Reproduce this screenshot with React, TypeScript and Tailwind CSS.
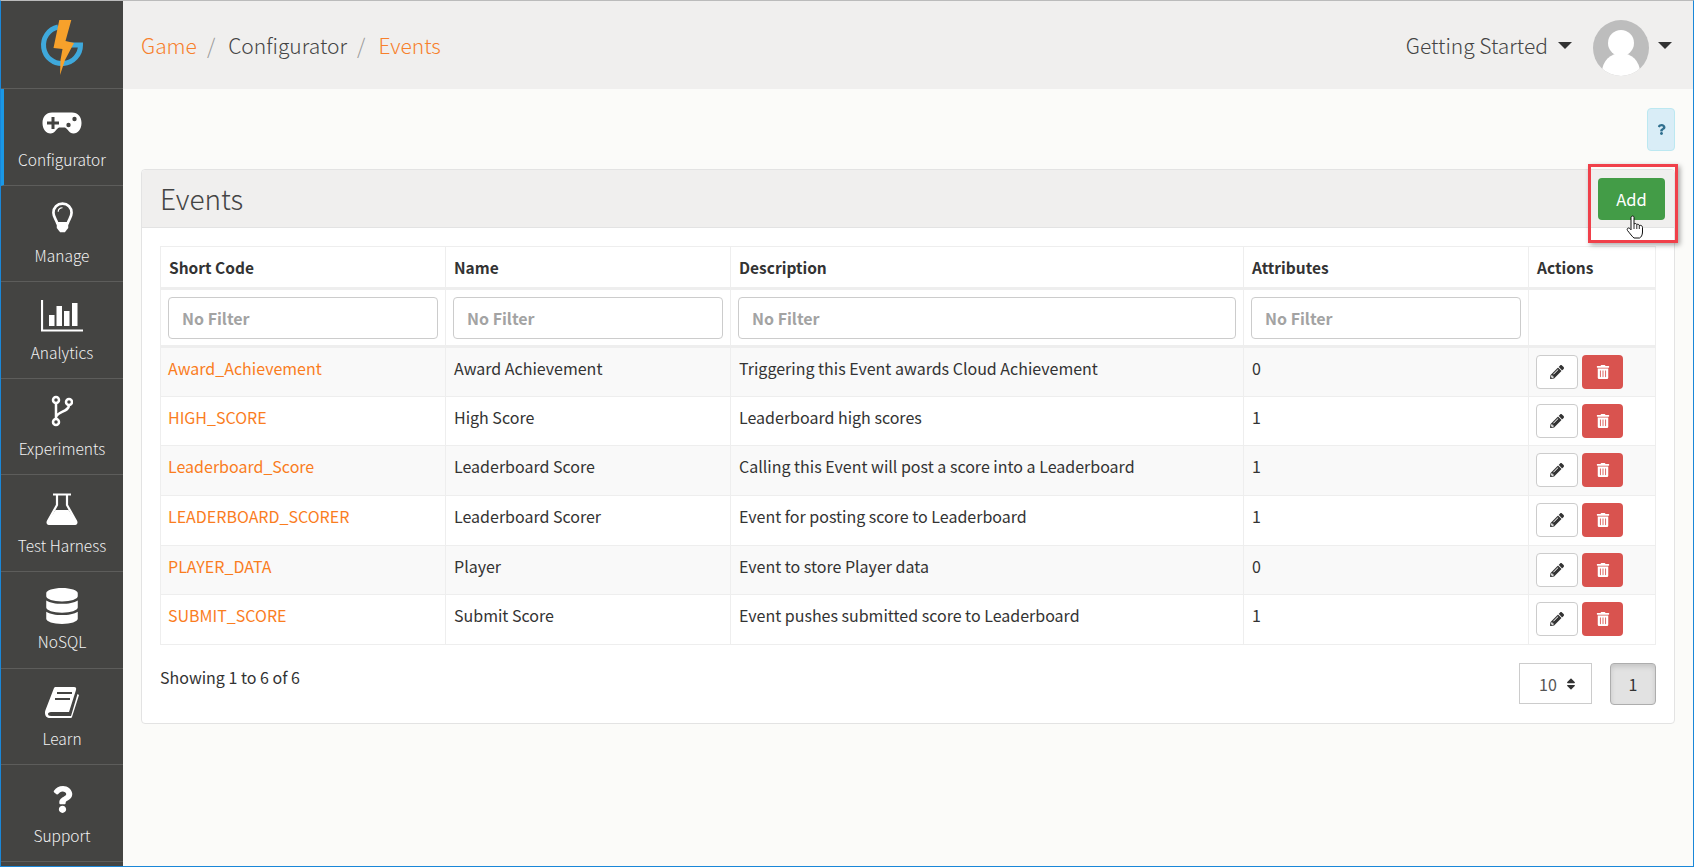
import type { ReactNode } from 'react'
import { FaDatabase, FaPencilAlt, FaQuestion, FaSort, FaTrashAlt } from 'react-icons/fa'

const font = '[font-family:"Noto_Sans_CJK_SC","Source_Sans_Pro","Noto_Sans",sans-serif]'

function Logo() {
  return (
    <svg width="48" height="60" viewBox="38 18 48 60" className="mt-[6px]">
      <path
        d="M58 27 A18.5 18.5 0 1 0 80.500 45 L70 45"
        fill="none"
        stroke="#3fa9dc"
        strokeWidth="5"
      />
      <path d="M59.300 20 H71.300 L65.500 41 L74 43 L65 60 L60 75 L60.500 60 L62.500 49 L53.500 48 Z" fill="#f7a12b" />
    </svg>
  )
}

function Gamepad() {
  return (
    <svg width="40" height="22" viewBox="0 0 40 22">
      <path
        d="M10 0.500 H30 C36 0.500 39.500 5 39.500 11 C39.500 17 36 21.500 31.500 21.500 C27 21.500 26 17 23 15.500 H17 C14 17 13 21.500 8.500 21.500 C4 21.500 0.500 17 0.500 11 C0.500 5 4 0.500 10 0.500 Z"
        fill="#fff"
      />
      <path d="M9.500 5 h3 v4.500 h4.500 v3 h-4.500 v4.500 h-3 v-4.500 h-4.500 v-3 h4.500 z" fill="#444442" />
      <circle cx="32.500" cy="7" r="2.200" fill="#444442" />
      <circle cx="26.500" cy="13" r="2.200" fill="#444442" />
    </svg>
  )
}

function Bulb() {
  return (
    <svg width="21" height="31" viewBox="0 0 22 32" className="-mt-[4px]">
      <path
        d="M11 1.500 C5.500 1.500 1.500 5.500 1.500 11 C1.500 15.500 4.500 18 5.500 22 H16.500 C17.500 18 20.500 15.500 20.500 11 C20.500 5.500 16.500 1.500 11 1.500 Z"
        fill="none"
        stroke="#fff"
        strokeWidth="2.800"
      />
      <path d="M5 21 H17 V27 L13.500 31.500 H8.500 L5 27 Z" fill="#fff" />
      <path d="M6.500 10 C6.500 7.500 8.500 5.800 11 5.800" fill="none" stroke="#fff" strokeWidth="1.200" />
    </svg>
  )
}

function Bars() {
  return (
    <svg width="42" height="32" viewBox="0 0 42 32">
      <path d="M1 0 V30.500 H42" fill="none" stroke="#fff" strokeWidth="2.200" />
      <rect x="8" y="15" width="5.500" height="11" fill="#fff" />
      <rect x="15.500" y="6" width="5.500" height="20" fill="#fff" />
      <rect x="23" y="11" width="5.500" height="15" fill="#fff" />
      <rect x="31" y="3" width="5.500" height="23" fill="#fff" />
    </svg>
  )
}

function Branch() {
  return (
    <svg width="22" height="32" viewBox="0 0 22 32" className="-mt-[4px]">
      <g fill="none" stroke="#fff" strokeWidth="2.500">
        <circle cx="5" cy="5" r="3" />
        <circle cx="5" cy="27" r="3" />
        <circle cx="18" cy="7" r="3" />
        <path d="M5 8 V24 M18 10 C18 17 7 16 5 22" />
      </g>
    </svg>
  )
}

function Flask() {
  return (
    <svg width="32" height="32" viewBox="0 0 32 32">
      <path d="M7 1.500 H25 M11 1.500 V12 L2 28 C1 30 2 31 4 31 H28 C30 31 31 30 30 28 L21 12 V1.500" fill="none" stroke="#fff" strokeWidth="2.200" />
      <path d="M9.500 17 H22.500 L30 28 C31 30 30 31 28 31 H4 C2 31 1 30 2 28 Z" fill="#fff" />
    </svg>
  )
}

function Book() {
  return (
    <svg width="34" height="31" viewBox="0 0 34 31">
      <path
        d="M9 1 C9.500 0.300 10 0 11 0 H29 C31 0 31.500 1 31 3 L24 25 H6 C4 25 3 26 3 27 C3 28 4 29 6 29 H26 L32.500 7 L34 8 L27 30 C26.700 31 26 31 25 31 H5 C2 31 0 29 0 26 C0 25 0 24 0.500 23 Z"
        fill="#fff"
      />
      <path d="M12 6 H27 M10 12 H25" stroke="#444442" strokeWidth="2" fill="none" />
    </svg>
  )
}

function Hand() {
  return (
    <svg width="18" height="24" viewBox="0 0 18 24">
      <path
        d="M5.500 1.500 C6.500 0.500 8 1 8 2.500 V9 C9 8.300 10.200 8.300 10.800 9.500 C11.700 9 12.900 9.300 13.300 10.500 C14.500 10 16.500 10.500 16.500 12.500 V17 C16.500 20 15 22.500 13.500 23 H8 C6.500 22 4 18.500 1.500 15.500 C0.500 14 2 12 3.800 13.500 L5 14.800 V2.500 Z"
        fill="#fff"
        stroke="#111"
        strokeWidth="1"
      />
      <path d="M8 9 V14 M10.800 9.500 V14 M13.300 10.500 V14" stroke="#111" strokeWidth="0.900" fill="none" />
    </svg>
  )
}

function Caret() {
  return <span className="w-0 h-0 border-x-[7px] border-x-transparent border-t-[7px] border-t-[#333]" />
}

const navItems: { label: string; icon: ReactNode; active?: boolean }[] = [
  { label: 'Configurator', icon: <Gamepad />, active: true },
  { label: 'Manage', icon: <Bulb /> },
  { label: 'Analytics', icon: <Bars /> },
  { label: 'Experiments', icon: <Branch /> },
  { label: 'Test Harness', icon: <Flask /> },
  { label: 'NoSQL', icon: <FaDatabase className="text-[36px] text-white" /> },
  { label: 'Learn', icon: <Book /> },
  { label: 'Support', icon: <FaQuestion className="text-[27px] text-white" /> },
]

const rows = [
  { code: 'Award_Achievement', name: 'Award Achievement', desc: 'Triggering this Event awards Cloud Achievement', attrs: 0 },
  { code: 'HIGH_SCORE', name: 'High Score', desc: 'Leaderboard high scores', attrs: 1 },
  { code: 'Leaderboard_Score', name: 'Leaderboard Score', desc: 'Calling this Event will post a score into a Leaderboard', attrs: 1 },
  { code: 'LEADERBOARD_SCORER', name: 'Leaderboard Scorer', desc: 'Event for posting score to Leaderboard', attrs: 1 },
  { code: 'PLAYER_DATA', name: 'Player', desc: 'Event to store Player data', attrs: 0 },
  { code: 'SUBMIT_SCORE', name: 'Submit Score', desc: 'Event pushes submitted score to Leaderboard', attrs: 1 },
]

const columns = [
  { label: 'Short Code', width: 'w-[285px]' },
  { label: 'Name', width: 'w-[285px]' },
  { label: 'Description', width: 'w-[513px]' },
  { label: 'Attributes', width: 'w-[285px]' },
]

function FilterInput() {
  return (
    <input
      placeholder="No Filter"
      className="block w-full h-[42px] px-[13px] bg-white border border-[#ccc] rounded text-base font-bold placeholder:text-[#a3a3a3]"
    />
  )
}

export default function App() {
  return (
    <div className={`${font} flex w-[1694px] h-[867px] overflow-hidden border-t border-t-[#bbb] border-x border-b border-x-[#1a87d8] border-b-[#1a87d8] bg-[#fbfbf9] text-[#333]`}>
      <aside className="w-[122px] shrink-0 bg-[#444442] text-[#f2f2f2]">
        <div className="h-[88px] flex items-center justify-center border-b border-[#5d5d5b]">
          <Logo />
        </div>
        {navItems.map(({ label, icon, active }) => (
          <div
            key={label}
            className={`h-[96.6px] flex flex-col items-center border-b border-[#5d5d5b] ${active ? 'border-l-[3px] border-l-[#1a98e6] pr-[3px]' : ''}`}
          >
            <div className="h-[36px] mt-[16px] flex items-center justify-center">{icon}</div>
            <div className="mt-[6.500px] text-[15.500px] font-light leading-[22px] whitespace-nowrap">{label}</div>
          </div>
        ))}
      </aside>

      <div className="flex-1 min-w-0 flex flex-col">
        <header className="h-[88px] shrink-0 bg-[#f0efee] flex items-center justify-between pl-[18px] pr-[21px]">
          <nav className="flex items-center text-[21px] font-light leading-[30px]">
            <span className="text-[#f7802c]">Game</span>
            <span className="pl-[10px] pr-[13px] text-[#999]">/</span>
            <span className="text-[#444]">Configurator</span>
            <span className="pl-[10px] pr-[13px] text-[#999]">/</span>
            <span className="text-[#f7802c]">Events</span>
          </nav>
          <div className="flex items-center">
            <span className="text-[21px] font-light leading-[30px] text-[#444]">Getting Started</span>
            <span className="ml-[10px] mr-[21px] flex"><Caret /></span>
            <div className="relative mt-[6px] w-[56px] h-[56px] rounded-full bg-[#bdbdbd] overflow-hidden">
              <div className="absolute left-[15px] top-[10px] w-[26px] h-[26px] rounded-full bg-white" />
              <div className="absolute left-[9px] top-[33px] w-[38px] h-[30px] rounded-t-full bg-white" />
            </div>
            <span className="ml-[9px] flex"><Caret /></span>
          </div>
        </header>

        <main className="flex-1 px-[18px]">
          <div className="flex justify-end pt-[19px] pb-[18px]">
            <button className="w-[28px] h-[43px] flex items-center justify-center bg-[#d9edf7] border border-[#bce8f1] rounded text-[#31708f]">
              <FaQuestion className="text-[11px]" />
            </button>
          </div>

          <section className="relative h-[555px] bg-white border border-[#e3e3e3] rounded">
            <div className="h-[58px] flex items-center justify-between bg-[#f0efee] border-b border-[#e3e3e3] pl-[18px] pr-[9px] rounded-t">
              <h1 className="-mt-[2px] text-[28px] font-light leading-[36px] text-[#444]">Events</h1>
              <button className="mt-[1px] w-[67px] h-[42px] bg-[#439c47] rounded text-white text-[16.500px] leading-[22px]">Add</button>
            </div>

            <div className="pt-[18px] pl-[18px] pr-[18px]">
              <table className="w-[1495px] table-fixed border-collapse text-[16px] leading-[22px]">
                <thead>
                  <tr className="h-[42px]">
                    {columns.map(({ label, width }) => (
                      <th key={label} className={`${width} border border-[#eee] border-b-[3px] px-2 text-left text-[15.500px] font-bold`}>{label}</th>
                    ))}
                    <th className="w-[127px] border border-[#eee] border-b-[3px] px-2 text-left text-[15.500px] font-bold">Actions</th>
                  </tr>
                </thead>
                <tbody>
                  <tr className="h-[58px]">
                    {columns.map(({ label }) => (
                      <td key={label} className="border border-[#eee] border-b-[3px] px-[7px]"><FilterInput /></td>
                    ))}
                    <td className="border border-[#eee] border-b-[3px]" />
                  </tr>
                  {rows.map(({ code, name, desc, attrs }, i) => (
                    <tr key={code} className={`h-[49.700px] ${i % 2 === 0 ? 'bg-[#f9f9f9]' : 'bg-white'}`}>
                      <td className="border border-[#eee] px-[7px] align-top pt-[9px] text-[#fa7d1e]">{code}</td>
                      <td className="border border-[#eee] px-2 align-top pt-[9px]">{name}</td>
                      <td className="border border-[#eee] px-2 align-top pt-[9px]">{desc}</td>
                      <td className="border border-[#eee] px-2 align-top pt-[9px]">{attrs}</td>
                      <td className="border border-[#eee] px-[7px] align-top pt-[7px]">
                        <div className="flex gap-[4px]">
                          <button className="w-[42px] h-[34px] flex items-center justify-center bg-white border border-[#ccc] rounded">
                            <FaPencilAlt className="text-[14px] text-[#333]" />
                          </button>
                          <button className="w-[41px] h-[34px] flex items-center justify-center bg-[#d9534f] rounded">
                            <FaTrashAlt className="text-[14px] text-white" />
                          </button>
                        </div>
                      </td>
                    </tr>
                  ))}
                </tbody>
              </table>

              <div className="flex items-start justify-between pt-[18px] w-[1496px]">
                <span className="text-[16px] leading-[22px] mt-[3px]">Showing 1 to 6 of 6</span>
                <div className="flex items-start gap-[18px]">
                  <div className="w-[73px] h-[41px] flex items-center justify-between bg-white border border-[#ccc] pl-[19px] pr-[13px] text-[16px] text-[#555]">
                    <span>10</span>
                    <FaSort className="text-[14px] text-[#333]" />
                  </div>
                  <button className="w-[46px] h-[42px] bg-[#e2e2e2] border border-[#adadad] rounded shadow-[inset_0_3px_5px_rgba(0,0,0,0.125)] text-[16px]">1</button>
                </div>
              </div>
            </div>

            <div className="absolute left-[1446px] top-[-6px] w-[90px] h-[79px] border-[3px] border-[#f0404a] shadow-[2px_2px_5px_rgba(0,0,0,0.35)] pointer-events-none" />
            <div className="absolute left-[1484px] top-[45px] pointer-events-none"><Hand /></div>
          </section>
        </main>
      </div>
    </div>
  )
}
